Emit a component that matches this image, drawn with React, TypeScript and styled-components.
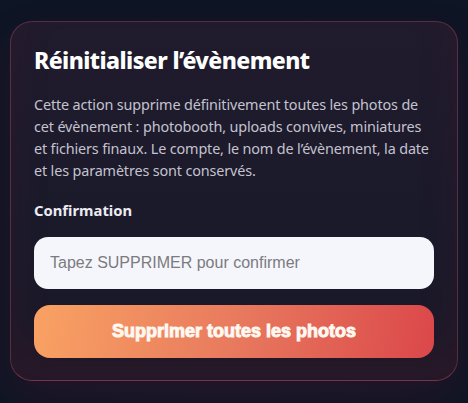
import styled, { createGlobalStyle } from 'styled-components';

const GlobalStyle = createGlobalStyle`
	html, body {
		margin: 0;
		padding: 0;
		background: #0e1524;
	}

	body {
		font-family: "Noto Sans", Lato, sans-serif;
		-webkit-font-smoothing: antialiased;
	}
`;

const Page = styled.div`
	width: 468px;
	height: 403px;
	box-sizing: border-box;
	padding: 21px 10px 0 10px;
	background: radial-gradient(ellipse at 50% 60%, #141726 0%, #0e1524 70%);
`;

const Card = styled.section`
	box-sizing: border-box;
	width: 448px;
	padding: 22px 23px 22px 23px;
	border-radius: 22px;
	border: 1px solid rgba(190, 80, 110, 0.38);
	border-bottom-color: rgba(200, 80, 100, 0.5);
	background: linear-gradient(180deg, #201b2d 0%, #1a1a2a 60%, #1c1827 100%);
	box-shadow:
		0 18px 40px rgba(120, 30, 60, 0.18),
		inset 0 -30px 40px rgba(110, 30, 50, 0.14);
	display: flex;
	flex-direction: column;
`;

const Title = styled.h1`
	margin: 0;
	font-size: 23px;
	line-height: 32px;
	font-weight: 800;
	letter-spacing: -0.025em;
	color: #ffffff;
`;

const Description = styled.p`
	margin: 18px 0 0 0;
	font-size: 14.4px;
	line-height: 22px;
	letter-spacing: -0.01em;
	color: #c4c3cf;
`;

const Label = styled.label`
	margin-top: 18px;
	font-size: 14.8px;
	line-height: 20px;
	font-weight: 700;
	color: #ecebf2;
`;

const Input = styled.input`
	margin-top: 17px;
	box-sizing: border-box;
	width: 100%;
	height: 52px;
	padding: 0 16px;
	border: none;
	border-radius: 14px;
	background: #f5f6fb;
	font-family: "Liberation Sans", Arial, sans-serif;
	font-size: 16px;
	color: #333;
	outline: none;

	&::placeholder {
		color: #7b7b80;
	}
`;

const DangerButton = styled.button`
	margin-top: 16px;
	height: 53px;
	width: 100%;
	border: none;
	border-radius: 16px;
	background: linear-gradient(100deg, #f9a263 0%, #e87a5e 50%, #db474a 100%);
	font-family: "Liberation Sans", Arial, sans-serif;
	font-size: 18px;
	font-weight: 800;
	color: #fff8f0;
	cursor: pointer;
	-webkit-text-stroke: 1px #fff8f0;
`;

export default function App() {
	return (
		<>
			<GlobalStyle />
			<Page>
				<Card>
					<Title>Réinitialiser l’évènement</Title>
					<Description>
						Cette action supprime définitivement toutes les photos de cet évènement : photobooth,
						uploads convives, miniatures et fichiers finaux. Le compte, le nom de l’évènement, la
						date et les paramètres sont conservés.
					</Description>
					<Label htmlFor="confirm">Confirmation</Label>
					<Input id="confirm" placeholder="Tapez SUPPRIMER pour confirmer" />
					<DangerButton type="button">Supprimer toutes les photos</DangerButton>
				</Card>
			</Page>
		</>
	);
}
